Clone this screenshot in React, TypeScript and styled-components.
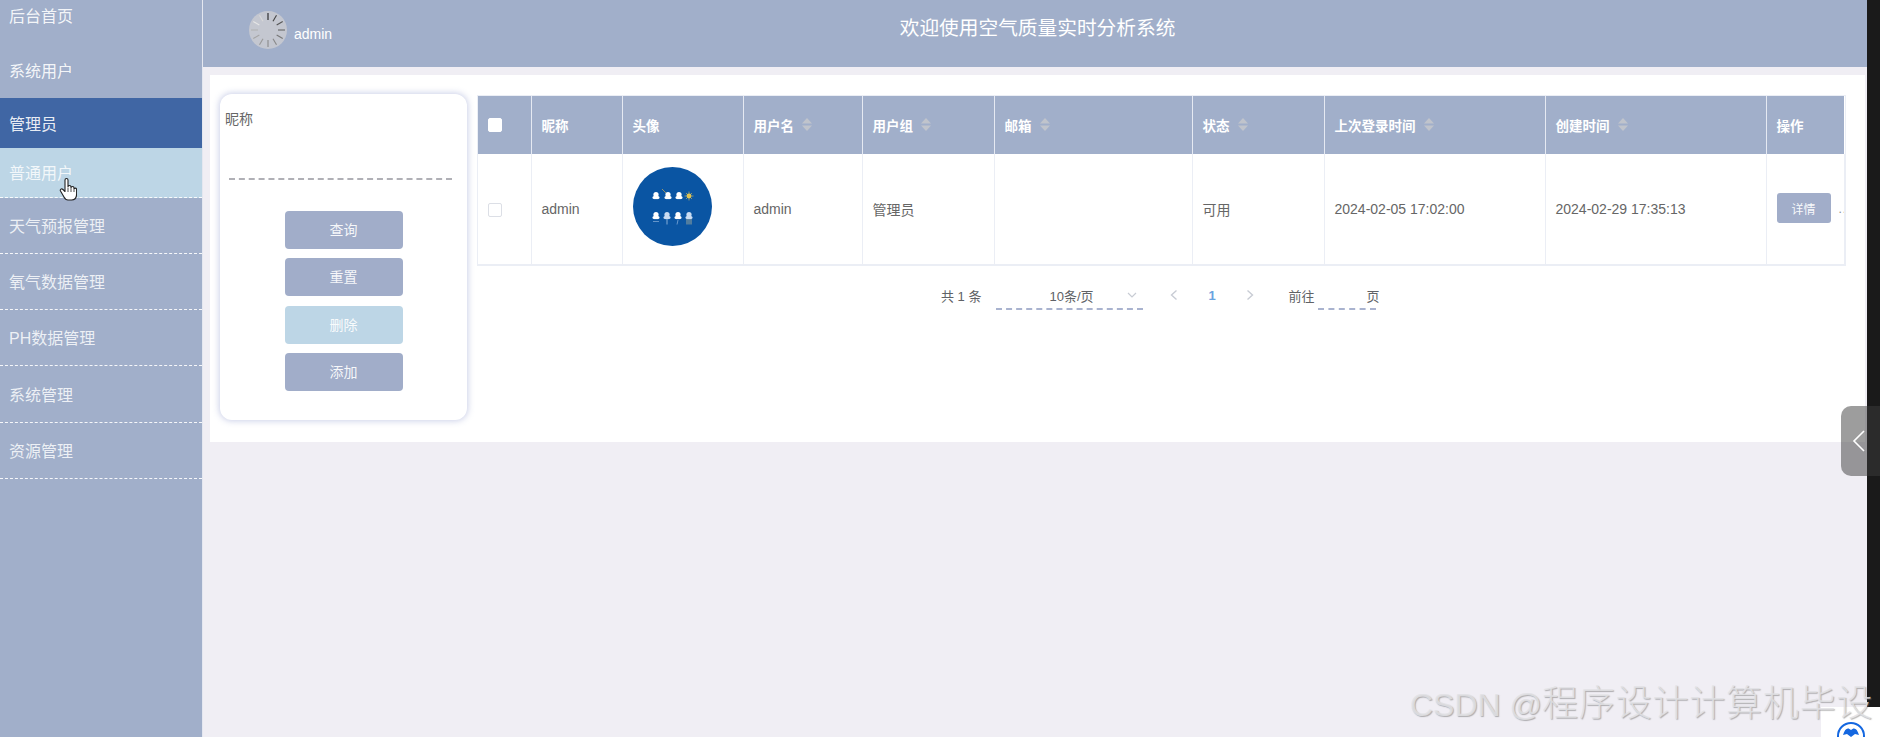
import React from "react";
import styled, { createGlobalStyle } from "styled-components";

const FONT = `"Liberation Sans", "Noto Sans CJK SC", sans-serif`;

const Global = createGlobalStyle`
  html, body { margin: 0; padding: 0; height: 737px; overflow: hidden; background: #f0eef4; }
  body { font-family: ${FONT}; }
  * { box-sizing: border-box; }
`;

const Page = styled.div`
  position: relative;
  display: flex;
  width: 1880px;
  height: 737px;
  overflow: hidden;
`;

const Sidebar = styled.nav`
  flex: 0 0 202px;
  background: #a1afca;
  display: flex;
  flex-direction: column;
`;

const NavItem = styled.div<{ $h: number; $bg?: string; $dashed?: boolean; $top?: boolean; $dim?: boolean }>`
  height: ${(p) => p.$h}px;
  flex: 0 0 auto;
  display: flex;
  align-items: ${(p) => (p.$top ? "flex-start" : "center")};
  padding-left: 9px;
  padding-top: ${(p) => (p.$top ? "5px" : "3px")};
  font-size: 16px;
  line-height: 24px;
  color: ${(p) => (p.$dim ? "rgba(255,255,255,.82)" : "rgba(255,255,255,.9)")};
  background: ${(p) => p.$bg ?? "transparent"};
  border-bottom: ${(p) => (p.$dashed ? "1px dashed rgba(255,255,255,.9)" : "0")};
`;

const Main = styled.div`
  flex: 1;
  min-width: 0;
  border-left: 1px solid #e4e7f0;
  display: flex;
  flex-direction: column;
`;

const Header = styled.header`
  height: 67px;
  flex: 0 0 67px;
  background: #a1afca;
  display: flex;
  align-items: center;
  padding-left: 46px;
`;

const UserBox = styled.div`
  display: flex;
  align-items: center;
  gap: 7px;
  height: 100%;
  padding-bottom: 8px;
`;

const Spinner = styled.svg`
  width: 38px;
  height: 38px;
  flex: none;
`;

const UserName = styled.span`
  font-size: 14px;
  color: #fff;
  margin-top: 8px;
`;

const Title = styled.h1`
  flex: 1;
  margin: 0 0 0 -52px;
  padding: 0 72px 14px 0;
  text-align: center;
  font-size: 19.7px;
  font-weight: 400;
  color: #fff;
`;

const Panel = styled.section`
  margin: 8px 2px 0 7px;
  height: 367px;
  background: #fff;
  display: flex;
  align-items: flex-start;
  gap: 11px;
  padding: 19px 0 0 10px;
`;

const SearchCard = styled.aside`
  flex: 0 0 247px;
  height: 326px;
  background: #fff;
  border-radius: 12px;
  box-shadow: 0 0 6px 1px rgba(140, 150, 205, 0.45);
  padding: 15px 15px 0 5px;
  display: flex;
  flex-direction: column;
`;

const FieldLabel = styled.label`
  font-size: 14px;
  line-height: 20px;
  color: #666;
`;

const FieldLine = styled.div`
  height: 0;
  margin: 49px 0 0 4px;
  border-bottom: 2px dashed #b0b0b6;
`;

const Buttons = styled.div`
  margin: 31px -10px 0 0;
  display: flex;
  flex-direction: column;
  align-items: center;
  gap: 9.3px;
`;

const ActionButton = styled.button<{ $light?: boolean }>`
  width: 118px;
  height: 38px;
  border: 0;
  border-radius: 4px;
  background: ${(p) => (p.$light ? "#bdd6e6" : "#a1adc9")};
  color: rgba(255, 255, 255, 0.92);
  font: 14px ${FONT};
  padding: 0 0 2px;
`;

const TableArea = styled.div`
  flex: 0 0 1366px;
  display: flex;
  flex-direction: column;
  margin-top: 2px;
`;

const Table = styled.table`
  width: 1366px;
  table-layout: fixed;
  border-collapse: collapse;
  outline: 1px solid #ebeef5;
`;

const HeadCell = styled.th`
  height: 58px;
  background: #a1afca;
  border-right: 1px solid #e5e9f2;
  padding: 0 0 1px 10px;
  text-align: left;
  font-size: 13.5px;
  font-weight: 700;
  color: #fff;
  white-space: nowrap;
  &:last-child { border-right: 0; }
`;

const HeadInner = styled.span`
  display: inline-flex;
  align-items: center;
  gap: 8px;
`;

const Cell = styled.td`
  height: 110px;
  border-right: 1px solid #ebeef5;
  border-bottom: 1px solid #ebeef5;
  padding: 0 0 0 10px;
  font-size: 14px;
  color: #666;
  white-space: nowrap;
  overflow: hidden;
`;

const Check = styled.span<{ $head?: boolean }>`
  display: block;
  width: 14px;
  height: 14px;
  border-radius: 2px;
  background: #fff;
  border: 1px solid ${(p) => (p.$head ? "#fff" : "#dcdfe6")};
  margin-top: ${(p) => (p.$head ? "0" : "2px")};
`;

const Caret = styled.svg`
  width: 10px;
  height: 13px;
  flex: none;
`;

const Avatar = styled.svg`
  display: block;
  width: 79px;
  height: 79px;
  margin-top: -5px;
`;

const DetailButton = styled.button`
  width: 54px;
  height: 30px;
  border: 0;
  border-radius: 3px;
  background: #a1adc9;
  color: rgba(255, 255, 255, 0.95);
  font: 12px ${FONT};
  padding: 0;
  margin-top: -1px;
  vertical-align: middle;
`;

const Overflowed = styled.span`
  color: #8a8d94;
  font-size: 12px;
  margin-left: 8px;
  vertical-align: middle;
  letter-spacing: 1px;
`;

const Pager = styled.div`
  display: flex;
  align-items: center;
  height: 33px;
  margin-top: 14px;
  padding-left: 463px;
  font-size: 13px;
  color: #606266;
`;

const PagerText = styled.span`
  white-space: nowrap;
`;

const SelectBox = styled.div`
  width: 147px;
  height: 30px;
  margin-left: 15px;
  padding: 2px 5px 0 53px;
  display: flex;
  align-items: center;
  justify-content: space-between;
  border-bottom: 2px dashed #a9b3cf;
`;

const PageChevron = styled.svg<{ $gap?: number }>`
  width: 12px;
  height: 12px;
  flex: none;
  margin-left: ${(p) => p.$gap ?? 0}px;
`;

const PageNumber = styled.span`
  margin-left: 28px;
  width: 9px;
  font-weight: 700;
  color: #6aa3e0;
`;

const JumpLabel = styled(PagerText)`
  margin-left: 32px;
`;

const JumpInput = styled.div`
  width: 58px;
  height: 29px;
  margin: 0 -10px 0 4px;
  border-bottom: 2px dashed #a9b3cf;
`;

const Handle = styled.div`
  position: absolute;
  left: 1841px;
  top: 406px;
  width: 39px;
  height: 70px;
  border-radius: 10px 0 0 10px;
  background: rgba(60, 60, 60, 0.5);
  display: flex;
  align-items: center;
  padding-left: 11px;
`;

const Strip = styled.div`
  flex: 0 0 13px;
  background: #1a1a1a;
`;

const CornerBox = styled.div`
  position: absolute;
  left: 1821px;
  top: 707px;
  width: 59px;
  height: 30px;
  background: #fff;
  overflow: hidden;
`;

const CornerIcon = styled.svg`
  position: absolute;
  left: 16px;
  top: 15px;
  width: 28px;
  height: 28px;
`;

const Watermark = styled.div`
  position: absolute;
  left: 1410px;
  top: 681px;
  font-size: 32px;
  line-height: 46px;
  white-space: nowrap;
  color: rgba(226, 226, 229, 0.85);
  text-shadow: 1px 1px 1px rgba(110, 110, 110, 0.5);
`;

const WatermarkCjk = styled.span`
  font-size: 36px;
  letter-spacing: 0.8px;
  font-weight: 300;
`;

const HandCursor = styled.svg`
  position: absolute;
  left: 59px;
  top: 177px;
  width: 18px;
  height: 24px;
`;

const nav = [
  { label: "后台首页", h: 42, top: true },
  { label: "系统用户", h: 56 },
  { label: "管理员", h: 50, bg: "#4066a4" },
  { label: "普通用户", h: 49.5, bg: "#bdd6e6", dashed: true, dim: true },
  { label: "天气预报管理", h: 56.3, dashed: true, dim: true },
  { label: "氧气数据管理", h: 56.3, dashed: true, dim: true },
  { label: "PH数据管理", h: 56.3, dashed: true, dim: true },
  { label: "系统管理", h: 56.3, dashed: true, dim: true },
  { label: "资源管理", h: 56.3, dashed: true, dim: true },
];

const columns: { label: string; width: number; sort?: boolean }[] = [
  { label: "", width: 53 },
  { label: "昵称", width: 91 },
  { label: "头像", width: 121 },
  { label: "用户名", width: 119, sort: true },
  { label: "用户组", width: 132, sort: true },
  { label: "邮箱", width: 198, sort: true },
  { label: "状态", width: 132, sort: true },
  { label: "上次登录时间", width: 221, sort: true },
  { label: "创建时间", width: 221, sort: true },
  { label: "操作", width: 78 },
];

const SortCaret = () => (
  <Caret viewBox="0 0 10 13">
    <path d="M5 0 L10 5.5 H0 Z" fill="#c0c4cc" />
    <path d="M0 7.5 H10 L5 13 Z" fill="#c0c4cc" />
  </Caret>
);

const SpinnerIcon = () => (
  <Spinner viewBox="0 0 38 38">
    <circle cx="19" cy="19" r="19" fill="#c4c7d0" />
    {Array.from({ length: 12 }).map((_, i) => {
      const shades = ["#222", "#444", "#555", "#666", "#777", "#888", "#8a8a8a", "#999", "#a5a5a5", "#b2b2b2", "#e6e6e6", "#d8d8d8"];
      return (
        <line
          key={i}
          x1="19"
          y1="2"
          x2="19"
          y2="9"
          stroke={shades[i]}
          strokeWidth="1.1"
          transform={`rotate(${i * 30} 19 19)`}
        />
      );
    })}
  </Spinner>
);

const Cloud = ({ x, y, fill = "#fff" }: { x: number; y: number; fill?: string }) => (
  <g transform={`translate(${x} ${y})`} fill={fill}>
    <circle cx="0" cy="-1.4" r="2.6" />
    <circle cx="-2" cy="1.6" r="1.5" />
    <circle cx="2" cy="1.6" r="1.5" />
    <rect x="-2" y="0" width="4" height="3.1" />
  </g>
);

const WeatherAvatar = () => (
  <Avatar viewBox="0 0 79 79">
    <circle cx="39.5" cy="39.5" r="39.5" fill="#0a55a3" />
    <Cloud x={23} y={29} />
    <path d="M29 22 L33 26" stroke="#b9a55c" strokeWidth="0.8" />
    <Cloud x={35} y={29} />
    <Cloud x={46} y={29} />
    <circle cx="56" cy="29" r="2.4" fill="#e7c64a" />
    <path d="M56 24.5 V33.5 M51.5 29 H60.5 M53 26 L59 32 M59 26 L53 32" stroke="#d8bf5c" strokeWidth="0.6" />
    <Cloud x={23} y={49} />
    <path d="M20.5 54.5 H25.5" stroke="#bcd4ee" strokeWidth="1" strokeDasharray="1 1" />
    <Cloud x={34} y={49} fill="#c9dcf2" />
    <path d="M34 52 V57.5" stroke="#bcd4ee" strokeWidth="0.7" />
    <Cloud x={45} y={49} />
    <path d="M45 53 L44 57.5" stroke="#8fb5e0" strokeWidth="0.7" />
    <Cloud x={56} y={49} fill="#c9dcf2" />
    <path d="M54 52 V57.5 M56 52 V57.5 M58 52 V57.5" stroke="#d9c99a" strokeWidth="0.7" />
  </Avatar>
);

const chevronLeft = "M8.5 1.5 L3.5 6 L8.5 10.5";
const chevronRight = "M3.5 1.5 L8.5 6 L3.5 10.5";

export default function App() {
  return (
    <Page>
      <Global />
      <Sidebar>
        {nav.map((n) => (
          <NavItem key={n.label} $h={n.h} $bg={n.bg} $dashed={n.dashed} $top={n.top} $dim={n.dim}>
            {n.label}
          </NavItem>
        ))}
      </Sidebar>
      <Main>
        <Header>
          <UserBox>
            <SpinnerIcon />
            <UserName>admin</UserName>
          </UserBox>
          <Title>欢迎使用空气质量实时分析系统</Title>
        </Header>
        <Panel>
          <SearchCard>
            <FieldLabel>昵称</FieldLabel>
            <FieldLine />
            <Buttons>
              <ActionButton>查询</ActionButton>
              <ActionButton>重置</ActionButton>
              <ActionButton $light>删除</ActionButton>
              <ActionButton>添加</ActionButton>
            </Buttons>
          </SearchCard>
          <TableArea>
            <Table>
              <colgroup>
                {columns.map((c, i) => (
                  <col key={i} style={{ width: c.width }} />
                ))}
              </colgroup>
              <thead>
                <tr>
                  {columns.map((c, i) => (
                    <HeadCell key={i}>
                      {i === 0 ? (
                        <Check $head />
                      ) : (
                        <HeadInner>
                          {c.label}
                          {c.sort && <SortCaret />}
                        </HeadInner>
                      )}
                    </HeadCell>
                  ))}
                </tr>
              </thead>
              <tbody>
                <tr>
                  <Cell><Check /></Cell>
                  <Cell>admin</Cell>
                  <Cell><WeatherAvatar /></Cell>
                  <Cell>admin</Cell>
                  <Cell>管理员</Cell>
                  <Cell />
                  <Cell>可用</Cell>
                  <Cell>2024-02-05 17:02:00</Cell>
                  <Cell>2024-02-29 17:35:13</Cell>
                  <Cell>
                    <DetailButton>详情</DetailButton>
                    <Overflowed>..</Overflowed>
                  </Cell>
                </tr>
              </tbody>
            </Table>
            <Pager>
              <PagerText>共 1 条</PagerText>
              <SelectBox>
                <PagerText>10条/页</PagerText>
                <PageChevron viewBox="0 0 12 12">
                  <path d="M2 4 L6 8 L10 4" fill="none" stroke="#c8ccd4" strokeWidth="1.2" />
                </PageChevron>
              </SelectBox>
              <PageChevron viewBox="0 0 12 12" $gap={25}>
                <path d={chevronLeft} fill="none" stroke="#c8ccd4" strokeWidth="1.4" />
              </PageChevron>
              <PageNumber>1</PageNumber>
              <PageChevron viewBox="0 0 12 12" $gap={27}>
                <path d={chevronRight} fill="none" stroke="#c8ccd4" strokeWidth="1.4" />
              </PageChevron>
              <JumpLabel>前往</JumpLabel>
              <JumpInput />
              <PagerText>页</PagerText>
            </Pager>
          </TableArea>
        </Panel>
      </Main>
      <Strip />
      <HandCursor viewBox="0 0 18 24">
        <path
          d="M6 3 a1.5 1.5 0 0 1 3 0 V10 a1.5 1.5 0 0 1 3 0 V11 a1.5 1.5 0 0 1 3 0 v1 a1.4 1.4 0 0 1 2.6 0 V17 c0 4 -2 6 -5 6 H9 c-2 0 -3 -1 -4 -3 L1.5 14 c-.8 -1.5 1 -3 2.5 -1.5 L6 14.5 Z"
          fill="#fff"
          stroke="#222"
          strokeWidth="1.1"
          strokeLinejoin="round"
        />
        <path d="M9 11 V15 M12 11.5 V15 M15 12.5 V15" stroke="#222" strokeWidth="0.8" fill="none" />
      </HandCursor>
      <Handle>
        <svg width="14" height="24" viewBox="0 0 14 24">
          <path d="M12 2 L2 12 L12 22" fill="none" stroke="#fff" strokeWidth="1.6" />
        </svg>
      </Handle>
      <CornerBox>
        <CornerIcon viewBox="0 0 28 28">
          <circle cx="14" cy="14" r="13" fill="#fff" stroke="#1467e0" strokeWidth="2" />
          <path d="M6 13 C8 6 11 5 14 8 C17 5 20 6 22 13 L18 12 L14 15 L10 12 Z" fill="#1467e0" />
        </CornerIcon>
      </CornerBox>
      <Watermark>
        CSDN @<WatermarkCjk>程序设计计算机毕设</WatermarkCjk>
      </Watermark>
    </Page>
  );
}
